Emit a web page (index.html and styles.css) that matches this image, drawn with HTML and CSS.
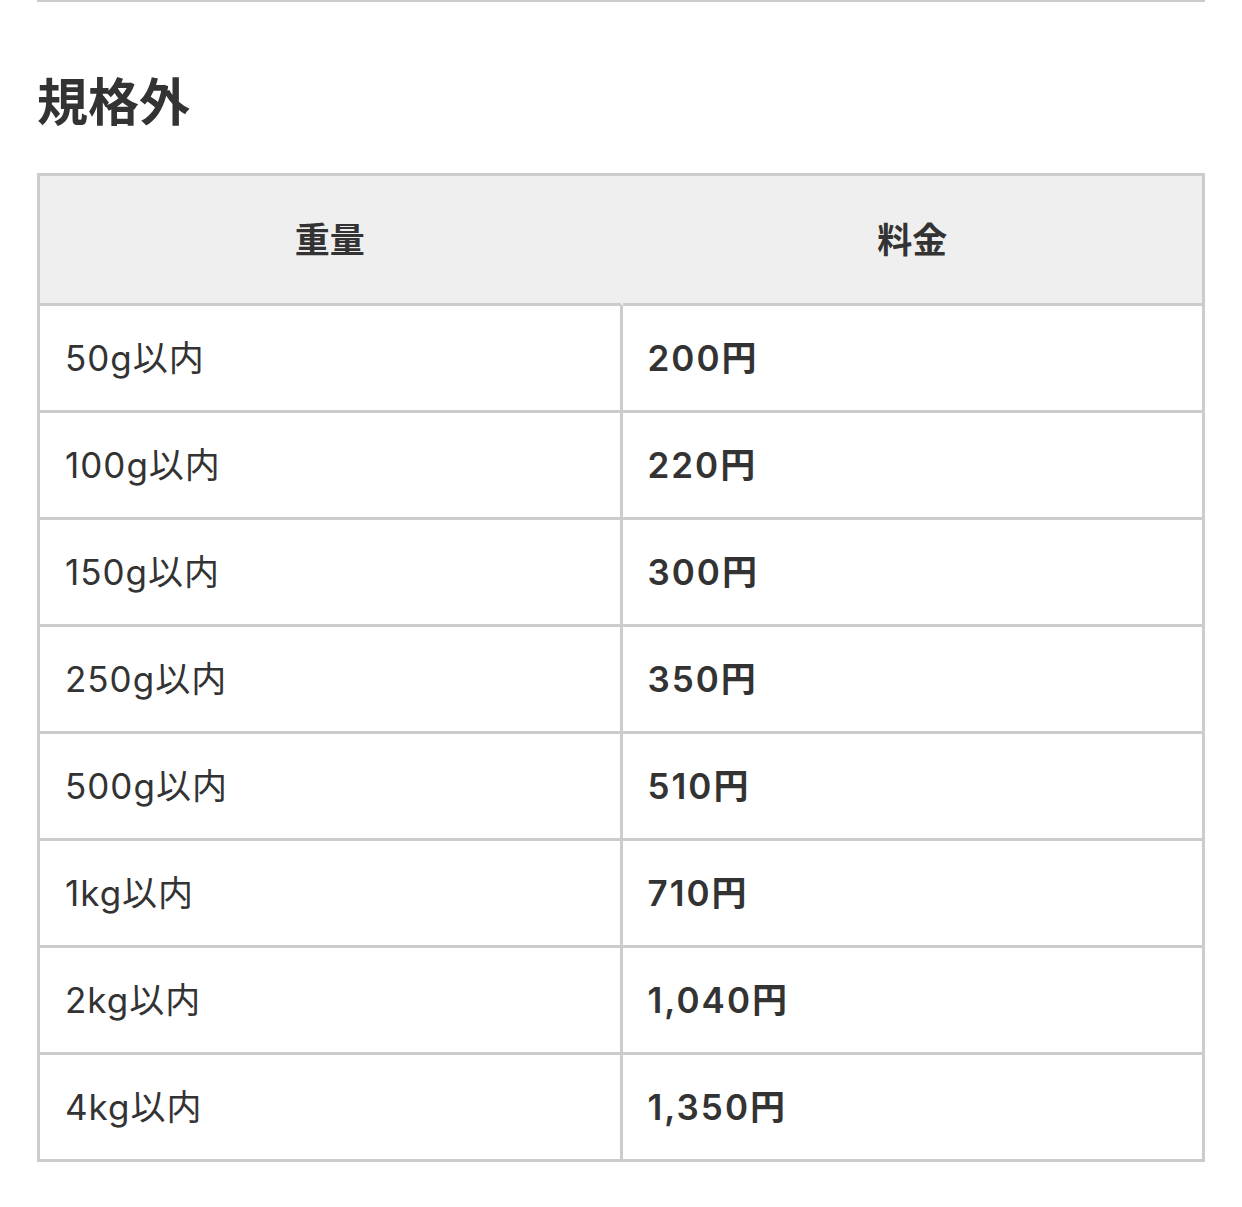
FILE: index.html
```html
<!DOCTYPE html>
<html lang="ja">
<head>
<meta charset="utf-8">
<link rel="stylesheet" href="styles.css">
</head>
<body>
<div class="page">
  <div class="rule"></div>
  <h2 class="title">規格外</h2>
  <table class="price">
    <thead>
      <tr><th class="first">重量</th><th>料金</th></tr>
    </thead>
    <tbody>
      <tr><td>50g以内</td><td class="val">200円</td></tr>
      <tr><td>100g以内</td><td class="val">220円</td></tr>
      <tr><td>150g以内</td><td class="val">300円</td></tr>
      <tr><td>250g以内</td><td class="val">350円</td></tr>
      <tr><td>500g以内</td><td class="val">510円</td></tr>
      <tr><td>1kg以内</td><td class="val">710円</td></tr>
      <tr><td>2kg以内</td><td class="val">1,040円</td></tr>
      <tr><td>4kg以内</td><td class="val">1,350円</td></tr>
    </tbody>
  </table>
</div>
</body>
</html>
```
FILE: styles.css
```css
html, body {
  margin: 0;
  padding: 0;
  background: #fff;
}
body {
  font-family: "Noto Sans CJK JP", "Noto Sans", sans-serif;
  color: #333;
}
.page {
  padding: 0 37px;
}
.rule {
  height: 0;
  border-top: 2px solid #ccc;
}
.title {
  margin: 67px 0 0;
  font-size: 51px;
  line-height: 60px;
  font-weight: 700;
  color: #333;
}
.price {
  margin-top: 44px;
  width: 100%;
  table-layout: fixed;
  border-collapse: separate;
  border-spacing: 0;
  border-top: 3px solid #ccc;
  border-left: 3px solid #ccc;
}
.price th,
.price td {
  border-right: 3px solid #ccc;
  border-bottom: 3px solid #ccc;
  font-size: 35px;
  text-align: left;
  padding: 25px 25px;
  line-height: 54px;
}
.price th {
  background: #efefef;
  text-align: center;
  font-weight: 700;
  height: 130px;
  padding: 0 25px 4px;
  box-sizing: border-box;
}
.price th.first {
  border-right-color: transparent;
}
.price td {
  font-family: "Inter", "Noto Sans CJK JP", sans-serif;
  font-weight: 400;
  letter-spacing: 1px;
}
.price td.val {
  font-weight: 600;
  letter-spacing: 2px;
}
```
